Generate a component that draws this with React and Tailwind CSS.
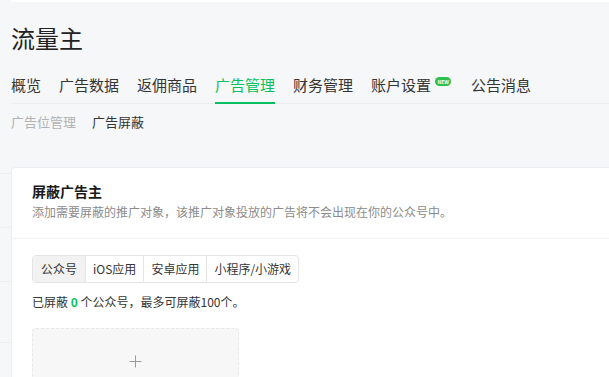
import React from "react";

const font = { fontFamily: '"Noto Sans CJK SC", "Noto Sans", sans-serif' };

export default function App() {
  const tabs = ["概览", "广告数据", "返佣商品", "广告管理", "财务管理", "账户设置", "公告消息"];
  return (
    <div className="w-[609px] h-[377px] overflow-hidden bg-[#f6f7f9] flex" style={font}>
      <div className="w-[11px] shrink-0 flex flex-col">
        <div className="h-[174px] border-b border-[#eceef0]" />
        <div className="h-[54px] border-b border-[#eceef0]" />
        <div className="h-[54px] border-b border-[#eceef0]" />
        <div className="h-[61px] border-b border-[#eceef0]" />
      </div>
      <div className="flex-1 min-w-0 flex flex-col border-t-2 border-white">
        <div className="pt-[18px] text-[24px] leading-[36px] text-[#222]">流量主</div>
        <div className="mt-[17px] flex items-end border-b border-[#eeeeee] pr-4">
          {tabs.map((t, i) => (
            <div
              key={t}
              className={
                "flex items-start pb-[5px] -mb-px text-[15px] leading-[24px] " +
                (i === 0 ? "" : "ml-[18px] ") +
                (t === "广告管理"
                  ? "border-b-2 border-[#07c160] text-[#07c160]"
                  : "border-b-2 border-transparent text-[#353535]")
              }
            >
              <span>{t}</span>
              {t === "账户设置" && (
                <span className="ml-[4px] mr-[2px] mt-[4px] h-[9px] w-[16px] rounded-full bg-[#2fbf4e] text-white text-[5px] leading-[9px] font-bold flex items-center justify-center">
                  NEW
                </span>
              )}
            </div>
          ))}
        </div>
        <div className="mt-[8px] flex gap-[16px] text-[13px] leading-[20px]">
          <span className="text-[#b2b2b2]">广告位管理</span>
          <span className="text-[#353535]">广告屏蔽</span>
        </div>
        <div className="mt-[35px] flex-1 bg-white rounded-l-[4px] border border-r-0 border-b-0 border-[#eceef1]">
          <div className="px-[20px] pt-[12px] pb-[16px] border-b border-[#f1f1f1]">
            <div className="text-[14px] leading-[22px] font-bold text-[#1a1a1a]">屏蔽广告主</div>
            <div className="text-[12px] leading-[20px] text-[#8c8c8c]">
              添加需要屏蔽的推广对象，该推广对象投放的广告将不会出现在你的公众号中。
            </div>
          </div>
          <div className="px-[20px] pt-[16px]">
            <div className="inline-flex h-[28px] border border-[#e4e4e4] rounded-[4px] overflow-hidden text-[12px] text-[#353535]">
              <div className="px-[8px] flex items-center bg-[#f2f2f2]">公众号</div>
              <div className="px-[7px] flex items-center border-l border-[#e4e4e4]">iOS应用</div>
              <div className="px-[7px] flex items-center border-l border-[#e4e4e4]">安卓应用</div>
              <div className="px-[7px] flex items-center border-l border-[#e4e4e4]">小程序/小游戏</div>
            </div>
            <div className="mt-[9px] text-[12px] leading-[20px] text-[#353535]">
              已屏蔽 <span className="text-[#07c160] font-bold">0</span> 个公众号，最多可屏蔽100个。
            </div>
            <div className="mt-[16px] w-[207px] h-[100px] rounded-[4px] border border-dashed border-[#e8e8e8] bg-[#f7f7f7] flex justify-center pt-[26px]">
              <svg width="13" height="13" viewBox="0 0 13 13">
                <path d="M6.5 0.5v12M0.5 6.5h12" stroke="#9a9a9a" strokeWidth="1" fill="none" />
              </svg>
            </div>
          </div>
        </div>
      </div>
    </div>
  );
}
